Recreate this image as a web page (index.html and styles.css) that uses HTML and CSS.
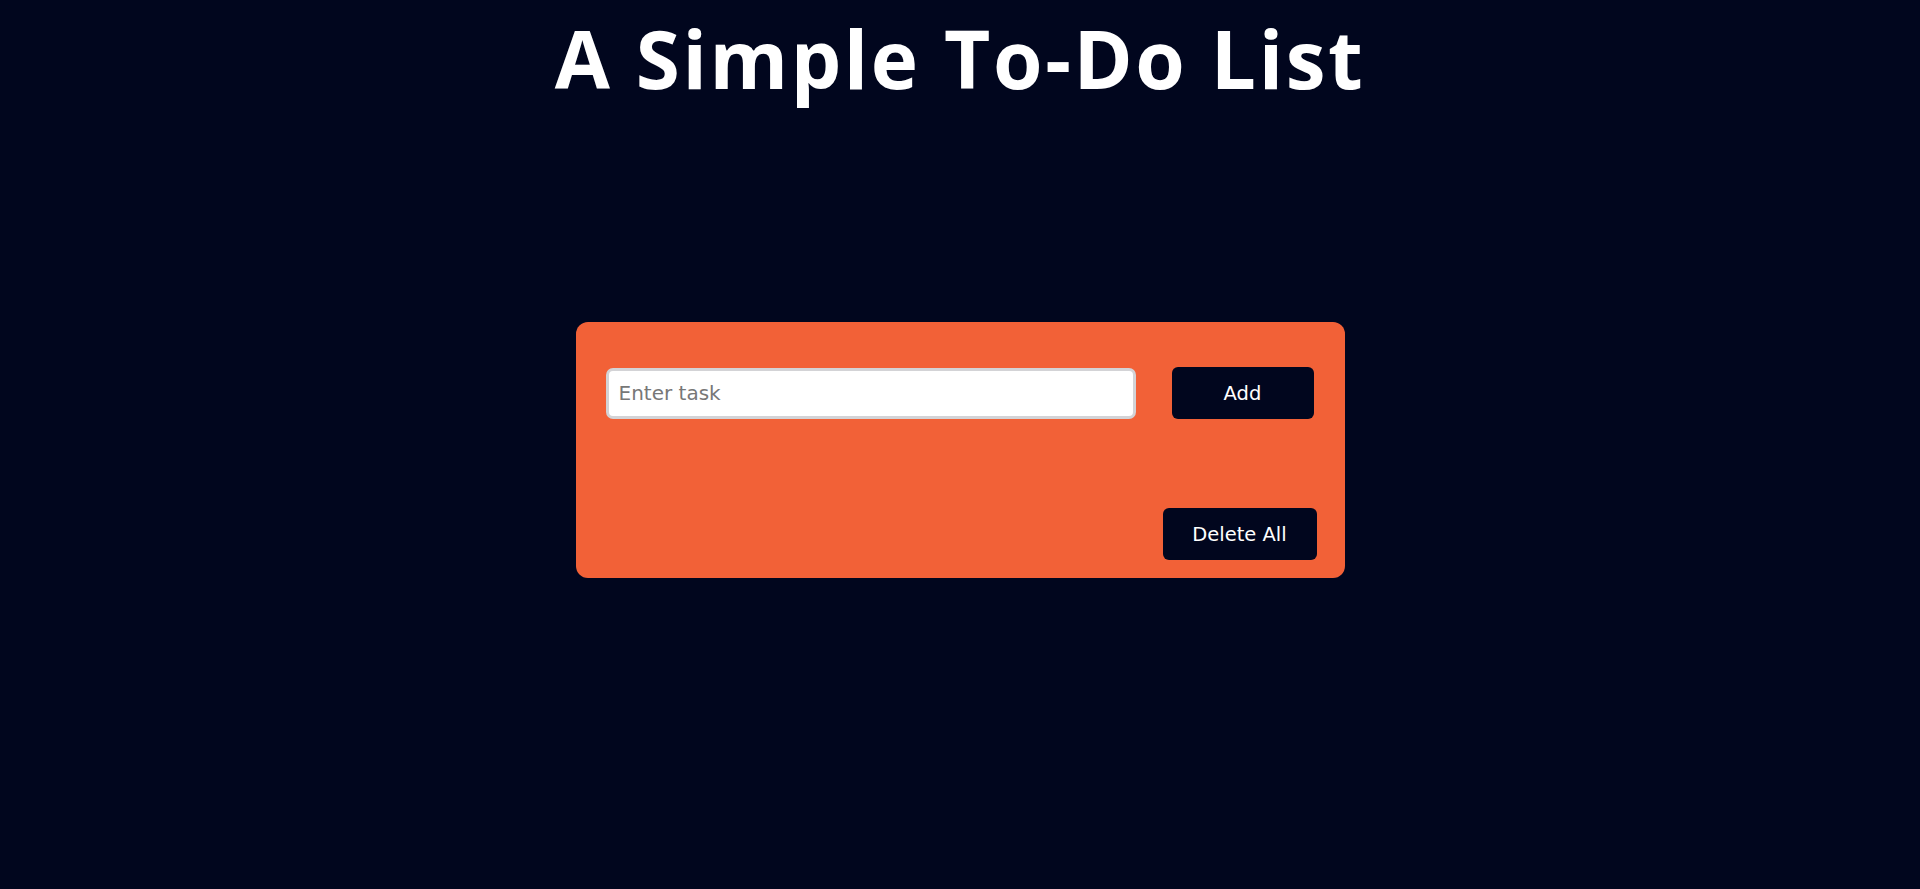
FILE: index.html
```html
<!DOCTYPE html>
<html lang="en">
<head>
<meta charset="utf-8">
<title>A Simple To-Do List</title>
<link rel="stylesheet" href="styles.css">
</head>
<body>
<h1 class="title">A Simple To-Do List</h1>
<div class="card">
  <div class="input-row">
    <input class="task-input" type="text" placeholder="Enter task">
    <button class="btn btn-add">Add</button>
  </div>
  <div class="footer-row">
    <button class="btn btn-delete">Delete All</button>
  </div>
</div>
</body>
</html>
```
FILE: styles.css
```css
html, body {
  margin: 0;
  padding: 0;
  background: #01061e;
  height: 100%;
}
body {
  font-family: "DejaVu Sans", Verdana, sans-serif;
}
.title {
  margin: 0;
  padding-top: 8px;
  text-align: center;
  color: #ffffff;
  font-family: "Open Sans", sans-serif;
  font-weight: 700;
  font-size: 80px;
  line-height: 100px;
  letter-spacing: 2.6px;
}
.card {
  box-sizing: border-box;
  width: 769px;
  height: 256px;
  margin: 214px auto 0;
  background: #f26137;
  border-radius: 12px;
  padding: 45px 28px 18px 30px;
  display: flex;
  flex-direction: column;
}
.input-row {
  display: flex;
  align-items: center;
  justify-content: space-between;
  padding-right: 3px;
}
.task-input {
  box-sizing: border-box;
  width: 530px;
  height: 51px;
  border: 3px solid #d3d3d6;
  border-radius: 7px;
  padding: 0 10px;
  font-family: "DejaVu Sans", Verdana, sans-serif;
  font-size: 20px;
  color: #333;
  background: #fff;
  outline: none;
}
.task-input::placeholder {
  color: #777;
}
.btn {
  box-sizing: border-box;
  height: 52px;
  border: none;
  border-radius: 6px;
  background: #01061e;
  color: #ffffff;
  font-family: "DejaVu Sans", Verdana, sans-serif;
  font-size: 19.5px;
  cursor: pointer;
}
.btn-add {
  width: 142px;
}
.footer-row {
  display: flex;
  justify-content: flex-end;
  margin-top: auto;
}
.btn-delete {
  width: 154px;
}
```
